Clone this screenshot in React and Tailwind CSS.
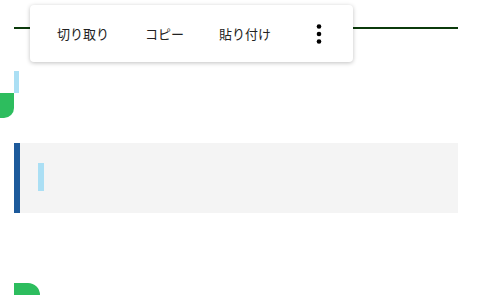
import React from "react";

const Dots = () => (
  <svg width="8" height="22" viewBox="0 0 8 22" fill="#000">
    <circle cx="4" cy="3.5" r="2.3" />
    <circle cx="4" cy="11" r="2.3" />
    <circle cx="4" cy="18.5" r="2.3" />
  </svg>
);

export default function App() {
  return (
    <div className="relative w-[480px] h-[295px] overflow-hidden bg-white font-['Noto_Sans_CJK_JP',sans-serif]">
      <div className="pt-[27px] pl-[14px] w-[458px]">
        <div className="h-[2px] bg-[#0b3a0b]" />
        <div className="mt-[42px] w-[5px] h-[22px] bg-[#abdff4]" />
        <div className="-ml-[14px] w-[14px] h-[25px] bg-[#2dbd5e] rounded-br-[10px]" />
        <div className="mt-[25px] h-[70px] border-l-[6px] border-[#1d5a9b] bg-[#f4f4f4] pl-[18px] pt-[20px]">
          <div className="w-[6px] h-[28px] bg-[#abdff4]" />
        </div>
        <div className="mt-[70px] w-[26px] h-[20px] bg-[#2dbd5e] rounded-tr-[12px]" />
      </div>

      <div className="absolute left-[30px] top-[5px] w-[323px] h-[57px] bg-white rounded-[4px] shadow-[0_1px_4px_rgba(0,0,0,0.25)] flex items-center pl-[27px] text-[13px] text-[#222]">
        <span>切り取り</span>
        <span className="ml-[36px]">コピー</span>
        <span className="ml-[35px]">貼り付け</span>
        <div className="ml-[44px] mt-[1px]">
          <Dots />
        </div>
      </div>
    </div>
  );
}
